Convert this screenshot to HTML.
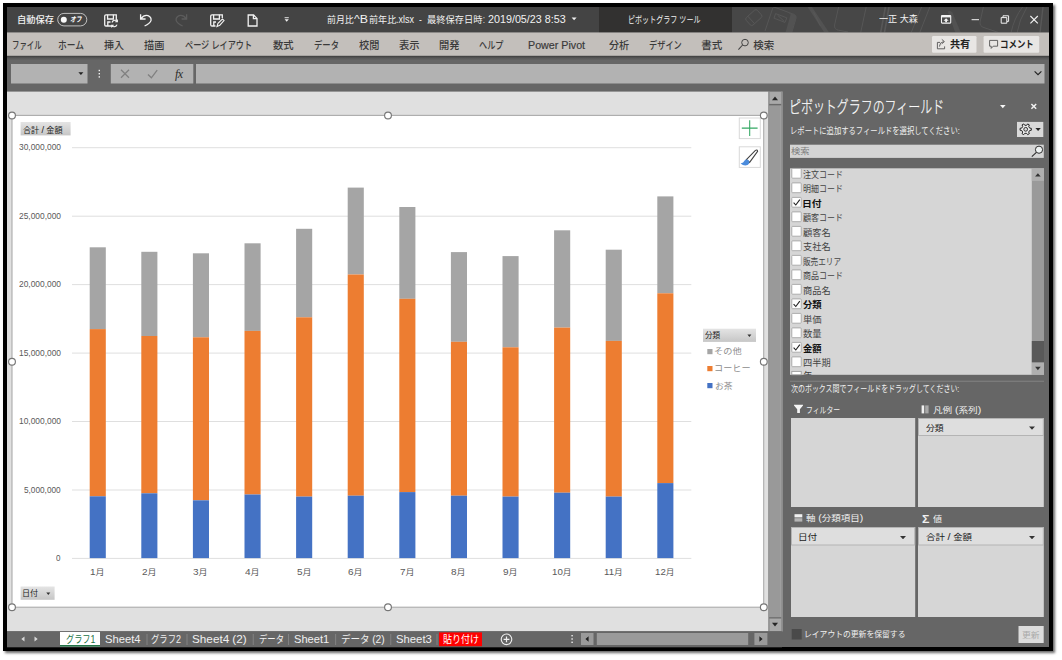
<!DOCTYPE html>
<html lang="ja">
<head>
<meta charset="utf-8">
<title>前月比^B前年比.xlsx - Excel</title>
<style>
html,body{margin:0;padding:0;background:#fff;}
body{width:1062px;height:660px;position:relative;overflow:hidden;font-family:"Liberation Sans","Noto Sans CJK JP",sans-serif;}
#frame{position:absolute;left:3px;top:3px;width:1050px;height:648px;background:#000;box-shadow:1.5px 1.5px 2.5px rgba(0,0,0,.6);}
#bg{position:absolute;left:0;top:0;width:1062px;height:660px;}
.t{position:absolute;white-space:pre;transform-origin:0 0;display:block;}
</style>
</head>
<body>
<div id="frame"></div>
<svg id="bg" width="1062" height="660" viewBox="0 0 1062 660">
<defs>
<linearGradient id="gbtn" x1="0" y1="0" x2="0" y2="1"><stop offset="0" stop-color="#e4e4e4"/><stop offset="1" stop-color="#c6c6c6"/></linearGradient>
<linearGradient id="gsh" x1="0" y1="0" x2="0" y2="1"><stop offset="0" stop-color="#3c3c3c"/><stop offset="0.5" stop-color="#585858"/><stop offset="1" stop-color="#666666"/></linearGradient>
<clipPath id="cpTitle"><rect x="732" y="7" width="317" height="25.5"/></clipPath>
</defs>
<!-- app background -->
<rect x="7" y="7" width="1042" height="640" fill="#666666"/>
<!-- ===== title bar ===== -->
<rect x="7" y="7" width="1042" height="25.5" fill="#444444"/>
<rect x="599" y="7" width="133" height="25.5" fill="#323130"/>
<rect x="732" y="7" width="317" height="25.5" fill="#474747"/>
<g clip-path="url(#cpTitle)" fill="none" stroke="#585858" stroke-width="0.9">
<g transform="translate(753.8 17.6) rotate(-42)"><rect x="-7.5" y="-5" width="15" height="10" rx="2"/><path d="M-3.5 -5 V5"/></g>
<path d="M765 31 L772.8 8 Q773.4 7 775 7.4 L794 14.4 Q796.6 15.6 796 18 L791.6 33"/>
<path d="M787.4 12 L794 14.4 Q796.6 15.6 796 18 L791.6 33 H785.4 L790.6 14.4Z" fill="#525252" stroke="none"/>
<path d="M775.6 13.6 L786.8 17.8 L785 22.4 L774 18.2Z M777.6 15.2 L784 21.2"/>
<path d="M807.6 7 H812 L829.4 33 H824.6Z" fill="#525252" stroke="none"/>
<path d="M813.6 12 L820.4 26"/>
<path d="M838.6 7 L834.6 25 Q834 29.4 838.4 30.2 L848 32"/>
<path d="M866.2 7 L860.6 33"/>
<path d="M885.4 7 L880.6 33 M889 7 L884.4 33" stroke-width="1.6"/>
<path d="M929.8 7 L919.6 33 M921.6 7 L911 33"/>
<path d="M947.6 11.6 Q950.6 10 952.4 12.6 L961 33 H955.4Z" fill="#525252" stroke="none"/>
<path d="M983.4 7 L980 22 Q979.6 26.4 984 27.6 L1000 33"/>
<path d="M1022.6 7 Q1014 18 1011 33 M1027 7 Q1019 20 1017 33"/>
<path d="M1043 7 L1040 33" stroke-width="1.4"/>
</g>
<!-- ===== ribbon ===== -->
<rect x="7" y="32.5" width="1042" height="23.5" fill="#c3bfbb"/>
<rect x="7" y="55.8" width="1042" height="4.6" fill="url(#gsh)"/>
<rect x="932" y="36" width="44.5" height="16.7" rx="1.2" fill="#e8e6e4"/>
<rect x="983.6" y="36" width="55.6" height="16.7" rx="1.2" fill="#e8e6e4"/>
<!-- ===== formula bar ===== -->
<rect x="11" y="64" width="76.5" height="19.5" fill="#b2b2b2"/>
<rect x="110.8" y="64" width="82.5" height="19.5" fill="#b2b2b2"/>
<rect x="196" y="64" width="848.5" height="19.5" fill="#b2b2b2"/>
<!-- ===== sheet area ===== -->
<rect x="7" y="91.6" width="761.5" height="539.7" fill="#e0e0e0"/>
<rect x="12" y="115.4" width="751.7" height="491.8" fill="#ffffff" stroke="#ababab" stroke-width="1.1"/>
<rect x="72" y="147.2" width="619.3" height="1" fill="#dfdfdf"/>
<rect x="72" y="215.7" width="619.3" height="1" fill="#dfdfdf"/>
<rect x="72" y="284.1" width="619.3" height="1" fill="#dfdfdf"/>
<rect x="72" y="352.6" width="619.3" height="1" fill="#dfdfdf"/>
<rect x="72" y="421.0" width="619.3" height="1" fill="#dfdfdf"/>
<rect x="72" y="489.5" width="619.3" height="1" fill="#dfdfdf"/>
<rect x="72" y="557.9" width="619.3" height="1" fill="#dfdfdf"/>
<rect x="89.7" y="247.3" width="16.1" height="81.8" fill="#a5a5a5"/>
<rect x="89.7" y="329.1" width="16.1" height="167.2" fill="#ed7d31"/>
<rect x="89.7" y="496.3" width="16.1" height="61.8" fill="#4472c4"/>
<rect x="141.3" y="251.8" width="16.1" height="84.2" fill="#a5a5a5"/>
<rect x="141.3" y="336" width="16.1" height="157.3" fill="#ed7d31"/>
<rect x="141.3" y="493.3" width="16.1" height="64.8" fill="#4472c4"/>
<rect x="192.9" y="253.3" width="16.1" height="84.0" fill="#a5a5a5"/>
<rect x="192.9" y="337.3" width="16.1" height="163.0" fill="#ed7d31"/>
<rect x="192.9" y="500.3" width="16.1" height="57.8" fill="#4472c4"/>
<rect x="244.5" y="243.3" width="16.1" height="87.6" fill="#a5a5a5"/>
<rect x="244.5" y="330.9" width="16.1" height="163.6" fill="#ed7d31"/>
<rect x="244.5" y="494.5" width="16.1" height="63.6" fill="#4472c4"/>
<rect x="296.1" y="228.8" width="16.1" height="88.5" fill="#a5a5a5"/>
<rect x="296.1" y="317.3" width="16.1" height="179.3" fill="#ed7d31"/>
<rect x="296.1" y="496.6" width="16.1" height="61.5" fill="#4472c4"/>
<rect x="347.7" y="187.6" width="16.1" height="86.9" fill="#a5a5a5"/>
<rect x="347.7" y="274.5" width="16.1" height="221.2" fill="#ed7d31"/>
<rect x="347.7" y="495.7" width="16.1" height="62.4" fill="#4472c4"/>
<rect x="399.3" y="207" width="16.1" height="91.8" fill="#a5a5a5"/>
<rect x="399.3" y="298.8" width="16.1" height="193.3" fill="#ed7d31"/>
<rect x="399.3" y="492.1" width="16.1" height="66.0" fill="#4472c4"/>
<rect x="450.9" y="252.1" width="16.1" height="89.7" fill="#a5a5a5"/>
<rect x="450.9" y="341.8" width="16.1" height="153.9" fill="#ed7d31"/>
<rect x="450.9" y="495.7" width="16.1" height="62.4" fill="#4472c4"/>
<rect x="502.5" y="256.1" width="16.1" height="91.2" fill="#a5a5a5"/>
<rect x="502.5" y="347.3" width="16.1" height="149.3" fill="#ed7d31"/>
<rect x="502.5" y="496.6" width="16.1" height="61.5" fill="#4472c4"/>
<rect x="554.1" y="230.3" width="16.1" height="97.3" fill="#a5a5a5"/>
<rect x="554.1" y="327.6" width="16.1" height="165.1" fill="#ed7d31"/>
<rect x="554.1" y="492.7" width="16.1" height="65.4" fill="#4472c4"/>
<rect x="605.7" y="249.7" width="16.1" height="91.2" fill="#a5a5a5"/>
<rect x="605.7" y="340.9" width="16.1" height="155.7" fill="#ed7d31"/>
<rect x="605.7" y="496.6" width="16.1" height="61.5" fill="#4472c4"/>
<rect x="657.3" y="196.4" width="16.1" height="96.9" fill="#a5a5a5"/>
<rect x="657.3" y="293.3" width="16.1" height="189.8" fill="#ed7d31"/>
<rect x="657.3" y="483.1" width="16.1" height="75.0" fill="#4472c4"/>
<rect x="20.6" y="122" width="50" height="13.4" fill="url(#gbtn)"/>
<rect x="20.6" y="586.5" width="34" height="13.3" fill="url(#gbtn)"/>
<rect x="703" y="328.7" width="53" height="13.2" fill="url(#gbtn)"/>
<path d="M46.3 592.4 h4 l-2 2.5Z M747.4 334.4 h4 l-2 2.5Z" fill="#333"/>
<rect x="707.3" y="349" width="5.2" height="5.2" fill="#a5a5a5"/>
<rect x="707.3" y="366" width="5.2" height="5.2" fill="#ed7d31"/>
<rect x="707.3" y="383" width="5.2" height="5.2" fill="#4472c4"/>
<rect x="739.3" y="118" width="21" height="20.6" fill="#fff" stroke="#d9d9d9" stroke-width="1"/>
<rect x="739.3" y="146.8" width="21" height="20.6" fill="#fff" stroke="#d9d9d9" stroke-width="1"/>
<path d="M741.8 128.1H757.6M749.7 120.3V136" stroke="#33a863" stroke-width="1.05" fill="none"/>
<path d="M746.4 159.6 L755.4 150.4 Q757.2 149.2 757.6 151.4 L749.6 162.4Z" fill="#fff" stroke="#404040" stroke-width="1.1"/>
<path d="M740.6 163.6 Q743.6 163 744.6 160.6 Q746.4 158.6 748.8 160.4 Q750.4 163 747.6 165 Q744 166.4 740.6 163.6Z" fill="#4a8bdc"/>
<circle cx="12" cy="115.5" r="3.4" fill="#fff" stroke="#767676" stroke-width="1.15"/>
<circle cx="388" cy="115.5" r="3.4" fill="#fff" stroke="#767676" stroke-width="1.15"/>
<circle cx="763.8" cy="115.5" r="3.4" fill="#fff" stroke="#767676" stroke-width="1.15"/>
<circle cx="12" cy="361.7" r="3.4" fill="#fff" stroke="#767676" stroke-width="1.15"/>
<circle cx="763.8" cy="361.7" r="3.4" fill="#fff" stroke="#767676" stroke-width="1.15"/>
<circle cx="12" cy="607.2" r="3.4" fill="#fff" stroke="#767676" stroke-width="1.15"/>
<circle cx="388" cy="607.2" r="3.4" fill="#fff" stroke="#767676" stroke-width="1.15"/>
<circle cx="763.8" cy="607.2" r="3.4" fill="#fff" stroke="#767676" stroke-width="1.15"/>
<!-- ===== v scrollbar ===== -->
<rect x="768.6" y="91.6" width="14" height="539.7" fill="#a9a9a9"/>
<rect x="768.6" y="91.6" width="1" height="539.7" fill="#8a8a8a"/>
<rect x="781.2" y="91.6" width="1.4" height="539.7" fill="#8c8c8c"/>
<rect x="769.8" y="105.4" width="10.8" height="512" fill="#999999"/>
<rect x="769.2" y="103.9" width="12" height="1.5" fill="#6a6a6a"/>
<rect x="769.2" y="617.2" width="12" height="1.3" fill="#6a6a6a"/>
<path d="M772 100.2 L775 96.6 L778 100.2Z" fill="#262626"/>
<path d="M772 622.8 L775 626.4 L778 622.8Z" fill="#262626"/>
<!-- ===== bottom bar ===== -->
<rect x="7" y="631.3" width="775" height="16" fill="#666666"/>
<rect x="60" y="632" width="40" height="14.5" fill="#ffffff"/>
<rect x="60" y="645" width="40" height="1.6" fill="#217346"/>
<rect x="439" y="632.4" width="43" height="13.8" fill="#ff0000"/>
<g fill="#8a8a8a">
<rect x="146.6" y="634" width="0.8" height="11"/><rect x="186.6" y="634" width="0.8" height="11"/>
<rect x="252.8" y="634" width="0.8" height="11"/><rect x="288" y="634" width="0.8" height="11"/>
<rect x="335.3" y="634" width="0.8" height="11"/><rect x="390.4" y="634" width="0.8" height="11"/>
<rect x="436.6" y="634" width="0.8" height="11"/>
</g>
<path d="M24.5 636.4 L21.3 639 L24.5 641.6Z M34.5 636.4 L37.7 639 L34.5 641.6Z" fill="#d8d8d8"/>
<circle cx="506.5" cy="639.3" r="5.3" fill="none" stroke="#f0f0f0" stroke-width="1.1"/>
<path d="M503.6 639.3H509.4M506.5 636.4V642.2" stroke="#f0f0f0" stroke-width="1.2" fill="none"/>
<g fill="#f0f0f0"><rect x="571.4" y="635" width="1.4" height="1.4"/><rect x="571.4" y="638.3" width="1.4" height="1.4"/><rect x="571.4" y="641.6" width="1.4" height="1.4"/></g>
<rect x="581" y="633" width="12.5" height="12" fill="#9a9a9a"/>
<rect x="596.8" y="633" width="151.4" height="12" fill="#9a9a9a"/>
<rect x="754.4" y="633" width="13" height="12" fill="#9a9a9a"/>
<path d="M588.6 636.3 L585.4 639 L588.6 641.7Z M759.4 636.3 L762.6 639 L759.4 641.7Z" fill="#222"/>
<!-- ===== right pane ===== -->
<rect x="1017" y="121.9" width="26.3" height="15.1" fill="#d9d9d9"/>
<rect x="790" y="144.7" width="253.8" height="13.2" fill="#d4d4d4"/>
<rect x="790" y="168.3" width="254" height="206.5" fill="#d6d6d6"/>
<rect x="1031.8" y="168.3" width="12.2" height="206.5" fill="#9a9a9a"/>
<rect x="1031.8" y="168.3" width="12.2" height="12.6" fill="#b0b0b0"/>
<rect x="1031.8" y="362.3" width="12.2" height="12.5" fill="#b0b0b0"/>
<rect x="1031.8" y="341" width="12.2" height="21.3" fill="#595959"/>
<path d="M1035.1 176.6 L1037.9 173.2 L1040.7 176.6Z" fill="#333"/>
<path d="M1035.1 366.8 L1037.9 370.2 L1040.7 366.8Z" fill="#333"/>
<rect x="791.8" y="168.4" width="9.4" height="9.8" rx="0.8" fill="#fff" stroke="#a6a6a6" stroke-width="0.9"/>
<rect x="791.8" y="182.9" width="9.4" height="9.8" rx="0.8" fill="#fff" stroke="#a6a6a6" stroke-width="0.9"/>
<rect x="791.8" y="197.4" width="9.4" height="9.8" rx="0.8" fill="#fff" stroke="#a6a6a6" stroke-width="0.9"/>
<path d="M793.6 202.6 L795.8 205.0 L799.8 199.6" fill="none" stroke="#222" stroke-width="1.1"/>
<rect x="791.8" y="211.9" width="9.4" height="9.8" rx="0.8" fill="#fff" stroke="#a6a6a6" stroke-width="0.9"/>
<rect x="791.8" y="226.4" width="9.4" height="9.8" rx="0.8" fill="#fff" stroke="#a6a6a6" stroke-width="0.9"/>
<rect x="791.8" y="240.9" width="9.4" height="9.8" rx="0.8" fill="#fff" stroke="#a6a6a6" stroke-width="0.9"/>
<rect x="791.8" y="255.4" width="9.4" height="9.8" rx="0.8" fill="#fff" stroke="#a6a6a6" stroke-width="0.9"/>
<rect x="791.8" y="269.9" width="9.4" height="9.8" rx="0.8" fill="#fff" stroke="#a6a6a6" stroke-width="0.9"/>
<rect x="791.8" y="284.4" width="9.4" height="9.8" rx="0.8" fill="#fff" stroke="#a6a6a6" stroke-width="0.9"/>
<rect x="791.8" y="298.9" width="9.4" height="9.8" rx="0.8" fill="#fff" stroke="#a6a6a6" stroke-width="0.9"/>
<path d="M793.6 304.1 L795.8 306.5 L799.8 301.1" fill="none" stroke="#222" stroke-width="1.1"/>
<rect x="791.8" y="313.4" width="9.4" height="9.8" rx="0.8" fill="#fff" stroke="#a6a6a6" stroke-width="0.9"/>
<rect x="791.8" y="327.9" width="9.4" height="9.8" rx="0.8" fill="#fff" stroke="#a6a6a6" stroke-width="0.9"/>
<rect x="791.8" y="342.4" width="9.4" height="9.8" rx="0.8" fill="#fff" stroke="#a6a6a6" stroke-width="0.9"/>
<path d="M793.6 347.6 L795.8 350.0 L799.8 344.6" fill="none" stroke="#222" stroke-width="1.1"/>
<rect x="791.8" y="356.9" width="9.4" height="9.8" rx="0.8" fill="#fff" stroke="#a6a6a6" stroke-width="0.9"/>
<rect x="791.8" y="371.4" width="9.4" height="3.4" fill="#fff" stroke="#9c9c9c" stroke-width="0.9"/>
<rect x="790" y="380.8" width="254" height="0.8" fill="#8a8a8a"/>
<rect x="791" y="418" width="124.2" height="89" fill="#d6d6d6"/>
<rect x="918" y="418" width="125.8" height="89" fill="#d6d6d6"/>
<rect x="791" y="527" width="124.2" height="90" fill="#d6d6d6"/>
<rect x="918" y="527" width="125.8" height="90" fill="#d6d6d6"/>
<rect x="918.5" y="418.5" width="124.8" height="17" fill="#dedede" stroke="#b4b4b4" stroke-width="1"/>
<rect x="791.5" y="527.5" width="123.2" height="17.5" fill="#dedede" stroke="#b4b4b4" stroke-width="1"/>
<rect x="918.5" y="527.5" width="124.8" height="17.5" fill="#dedede" stroke="#b4b4b4" stroke-width="1"/>
<path d="M1029 426.6 h6 l-3 3.2Z M900 536 h6 l-3 3.2Z M1029 536 h6 l-3 3.2Z" fill="#333"/>
<rect x="791.7" y="629" width="10" height="10.5" fill="#4a4a4a"/>
<rect x="1018.5" y="626" width="25.2" height="17" fill="#dcdcdc"/>
<rect x="57.7" y="13.4" width="29.1" height="12.5" rx="6.25" fill="none" stroke="#d4d4d4" stroke-width="0.85"/>
<circle cx="63.8" cy="19.7" r="3" fill="#fafafa"/>
<g fill="none" stroke="#f2f2f2" stroke-width="1.3"><path d="M111 26 H106 Q104.7 26 104.7 24.7 V16 Q104.7 14.8 106 14.8 H116.3 V20"/><path d="M107.6 14.8 V19 H113.4 V14.8"/><path d="M107.8 26 V22 H110.5"/><path d="M112 22.5 A3 3 0 0 1 117.2 21.4 M117.4 19.6 V21.8 H115.2 M117 24.6 A3 3 0 0 1 111.8 25.6 M111.6 27.4 V25.2 H113.8" stroke-width="1.1"/></g>
<path d="M140.6 14.2 V19 H145.6 M141 18.6 Q144 14.6 148 15.6 Q151.6 17 151 20.6 Q150 23.4 144.6 26" fill="none" stroke="#f2f2f2" stroke-width="1.3"/>
<path d="M186.6 14.2 V19 H181.6 M186.2 18.6 Q183.2 14.6 179.2 15.6 Q175.6 17 176.2 20.6 Q177.2 23.4 182.6 26" fill="none" stroke="#5c5c5c" stroke-width="1.3"/>
<g fill="none" stroke="#f2f2f2" stroke-width="1.3"><path d="M215.5 26 H212 Q210.7 26 210.7 24.7 V16 Q210.7 14.8 212 14.8 H222.3 V18"/><path d="M213.6 14.8 V19 H219.4 V14.8"/><path d="M213.8 26 V22 H216"/><path d="M217 26.4 L218 23.4 L222.4 19 L224 20.6 L219.8 25.2Z" stroke-width="1.1"/></g>
<path d="M248.2 15 H253.6 L257 18.4 V26 H248.2Z M253.4 15 V18.6 H257" fill="none" stroke="#f2f2f2" stroke-width="1.3"/>
<path d="M284.6 17.7 H288.8" stroke="#f2f2f2" stroke-width="0.9"/><path d="M284.6 19.3 H288.8 L286.7 21.7Z" fill="#f2f2f2"/>
<path d="M571.6 17.4 h5 l-2.5 2.8Z" fill="#f2f2f2"/>
<rect x="941.5" y="15.5" width="9.2" height="7.6" rx="0.6" fill="none" stroke="#f2f2f2" stroke-width="1.1"/><path d="M941.5 16.6 H950.7" stroke="#f2f2f2" stroke-width="1.6"/><path d="M946.1 18.2 L948.7 20.8 H947 V22.2 H945.2 V20.8 H943.5Z" fill="#f2f2f2"/>
<path d="M971.6 19.7 H979" stroke="#f2f2f2" stroke-width="1"/>
<path d="M1001.2 17.6 H1006.8 V23.2 H1001.2Z M1003 17.4 V15.8 H1008.6 V21.4 H1007" fill="none" stroke="#f2f2f2" stroke-width="1"/>
<path d="M1030.4 16 L1037.8 23.4 M1037.8 16 L1030.4 23.4" stroke="#f2f2f2" stroke-width="1.1"/>
<circle cx="745" cy="42.6" r="3.3" fill="none" stroke="#444" stroke-width="1"/><path d="M742.6 45 L738.4 49.6" stroke="#444" stroke-width="1.1"/>
<path d="M940 42.4 H937.4 V48.8 H944.6 V46.4 M939.4 46.6 Q939.6 42.2 943.6 41.6 M941.8 39.4 L944.4 41.6 L941.8 43.8" fill="none" stroke="#555" stroke-width="0.9"/>
<path d="M989.6 40.4 H997.6 V46.2 H993.2 L991.2 48.4 V46.2 H989.6Z" fill="none" stroke="#555" stroke-width="0.9"/>
<path d="M78.4 72.2 h5 l-2.5 2.7Z" fill="#222"/>
<g fill="#f0f0f0"><rect x="98.6" y="69.8" width="1.4" height="1.4"/><rect x="98.6" y="73" width="1.4" height="1.4"/><rect x="98.6" y="76.2" width="1.4" height="1.4"/></g>
<path d="M121 69.8 L129 77.8 M129 69.8 L121 77.8" stroke="#808080" stroke-width="1.25"/>
<path d="M148 74.4 L151.4 77.8 L157.2 70.2" fill="none" stroke="#808080" stroke-width="1.35"/>
<path d="M1034.6 71.4 L1038 74.6 L1041.4 71.4" fill="none" stroke="#222" stroke-width="1.2"/>
<path d="M1000 105 h5.6 l-2.8 3.3Z" fill="#f6f6f6"/>
<path d="M1031.4 104 L1036.2 108.8 M1036.2 104 L1031.4 108.8" stroke="#f0f0f0" stroke-width="1.5"/>
<path d="M1029.62 128.09 L1031.32 128.34 L1031.32 130.26 L1029.62 130.51 L1028.71 132.09 L1029.34 133.68 L1027.67 134.65 L1026.61 133.30 L1024.79 133.30 L1023.73 134.65 L1022.06 133.68 L1022.69 132.09 L1021.78 130.51 L1020.08 130.26 L1020.08 128.34 L1021.78 128.09 L1022.69 126.51 L1022.06 124.92 L1023.73 123.95 L1024.79 125.30 L1026.61 125.30 L1027.67 123.95 L1029.34 124.92 L1028.71 126.51Z" fill="#ececec" stroke="#222" stroke-width="1" stroke-linejoin="round"/><circle cx="1025.7" cy="129.3" r="1.9" fill="#d8d8d8" stroke="#222" stroke-width="0.9"/>
<path d="M1035.4 128 h5.4 l-2.7 2.9Z" fill="#262626"/>
<circle cx="1039" cy="149.7" r="3.6" fill="#eef2f2" stroke="#2c2c2c" stroke-width="1"/><path d="M1036.4 152.4 L1031.8 156.6" stroke="#2c2c2c" stroke-width="1.1"/>
<path d="M794 404.8 H803 V405.6 L799.9 409.2 V413 H797.2 V409.2 L794 405.6Z" fill="#f4f4f4"/>
<rect x="921.6" y="405.4" width="2.6" height="8" fill="#f0f0f0"/><rect x="925.2" y="405.4" width="3.4" height="8" fill="#a8a8a8"/>
<rect x="794.5" y="514.2" width="7.8" height="3.2" fill="#f0f0f0"/><rect x="794.5" y="518.2" width="7.8" height="3.4" fill="#b4b4b4"/>
</svg>
<span class="t" style="left:17.17px;top:13.50px;font-size:9px;line-height:13.5px;color:#f2f2f2;transform:scaleX(1.031);font-weight:500;">自動保存</span>
<span class="t" style="left:70.33px;top:14.20px;font-size:7.5px;line-height:11.25px;color:#ffffff;transform:scaleX(0.773);font-style:italic;font-weight:700;">オフ</span>
<span class="t" style="left:326.60px;top:13.70px;font-size:9px;line-height:13.5px;color:#f2f2f2;transform:scaleX(0.989);">前月比</span>
<span class="t" style="left:354.30px;top:12.20px;font-size:10.5px;line-height:15.75px;color:#f2f2f2;transform:scaleX(1.175);">^B</span>
<span class="t" style="left:368.50px;top:13.70px;font-size:9px;line-height:13.5px;color:#f2f2f2;transform:scaleX(1.011);">前年比</span>
<span class="t" style="left:396.30px;top:12.20px;font-size:10.2px;line-height:15.3px;color:#f2f2f2;transform:scaleX(0.881);">.xlsx</span>
<span class="t" style="left:419.30px;top:12.20px;font-size:10px;line-height:15.0px;color:#f2f2f2;transform:scaleX(0.850);">-</span>
<span class="t" style="left:426.50px;top:13.70px;font-size:9px;line-height:13.5px;color:#f2f2f2;transform:scaleX(1.026);">最終保存日時</span>
<span class="t" style="left:482.90px;top:12.20px;font-size:10px;line-height:15.0px;color:#f2f2f2;transform:scaleX(0.667);">:</span>
<span class="t" style="left:488.10px;top:12.20px;font-size:10.3px;line-height:15.45px;color:#f2f2f2;transform:scaleX(1.043);">2019/05/23 8:53</span>
<span class="t" style="left:628.42px;top:13.50px;font-size:9px;line-height:13.5px;color:#f2f2f2;transform:scaleX(0.784);">ピボットグラフ ツール</span>
<span class="t" style="left:878.60px;top:13.00px;font-size:9px;line-height:13.5px;color:#f2f2f2;transform:scaleX(1.010);">一正 大森</span>
<span class="t" style="left:12.29px;top:37.80px;font-size:10.5px;line-height:15.75px;color:#3a3a3a;transform:scaleX(0.707);font-weight:500;">ファイル</span>
<span class="t" style="left:57.90px;top:37.80px;font-size:10.5px;line-height:15.75px;color:#3a3a3a;transform:scaleX(0.829);font-weight:500;">ホーム</span>
<span class="t" style="left:103.80px;top:37.80px;font-size:10.5px;line-height:15.75px;color:#3a3a3a;transform:scaleX(0.952);font-weight:500;">挿入</span>
<span class="t" style="left:144.10px;top:37.80px;font-size:10.5px;line-height:15.75px;color:#3a3a3a;transform:scaleX(0.967);font-weight:500;">描画</span>
<span class="t" style="left:185.40px;top:37.80px;font-size:10.5px;line-height:15.75px;color:#3a3a3a;transform:scaleX(0.774);font-weight:500;">ページ レイアウト</span>
<span class="t" style="left:273.30px;top:37.80px;font-size:10.5px;line-height:15.75px;color:#3a3a3a;transform:scaleX(0.981);font-weight:500;">数式</span>
<span class="t" style="left:313.70px;top:37.80px;font-size:10.5px;line-height:15.75px;color:#3a3a3a;transform:scaleX(0.794);font-weight:500;">データ</span>
<span class="t" style="left:358.50px;top:37.80px;font-size:10.5px;line-height:15.75px;color:#3a3a3a;transform:scaleX(0.967);font-weight:500;">校閲</span>
<span class="t" style="left:398.60px;top:37.80px;font-size:10.5px;line-height:15.75px;color:#3a3a3a;transform:scaleX(0.981);font-weight:500;">表示</span>
<span class="t" style="left:438.60px;top:37.80px;font-size:10.5px;line-height:15.75px;color:#3a3a3a;transform:scaleX(0.976);font-weight:500;">開発</span>
<span class="t" style="left:479.00px;top:37.80px;font-size:10.5px;line-height:15.75px;color:#3a3a3a;transform:scaleX(0.778);font-weight:500;">ヘルプ</span>
<span class="t" style="left:527.70px;top:36.80px;font-size:11px;line-height:16.5px;color:#3a3a3a;transform:scaleX(0.972);-webkit-text-stroke:0.2px #3a3a3a;">Power Pivot</span>
<span class="t" style="left:608.70px;top:37.80px;font-size:10.5px;line-height:15.75px;color:#3a3a3a;transform:scaleX(0.962);font-weight:500;">分析</span>
<span class="t" style="left:648.90px;top:37.80px;font-size:10.5px;line-height:15.75px;color:#3a3a3a;transform:scaleX(0.781);font-weight:500;">デザイン</span>
<span class="t" style="left:701.30px;top:37.80px;font-size:10.5px;line-height:15.75px;color:#3a3a3a;transform:scaleX(1.000);font-weight:500;">書式</span>
<span class="t" style="left:753.20px;top:37.80px;font-size:10.5px;line-height:15.75px;color:#3a3a3a;transform:scaleX(1.000);font-weight:500;">検索</span>
<span class="t" style="left:949.70px;top:37.20px;font-size:10px;line-height:15.0px;color:#222;transform:scaleX(1.010);font-weight:bold;">共有</span>
<span class="t" style="left:1000.16px;top:36.80px;font-size:10px;line-height:15.0px;color:#222;transform:scaleX(0.845);font-weight:bold;">コメント</span>
<span class="t" style="left:18.50px;top:141.40px;font-size:9.3px;line-height:13.95px;color:#595959;transform:scaleX(0.902);">30,000,000</span>
<span class="t" style="left:18.50px;top:209.90px;font-size:9.3px;line-height:13.95px;color:#595959;transform:scaleX(0.902);">25,000,000</span>
<span class="t" style="left:18.50px;top:278.30px;font-size:9.3px;line-height:13.95px;color:#595959;transform:scaleX(0.902);">20,000,000</span>
<span class="t" style="left:18.50px;top:346.80px;font-size:9.3px;line-height:13.95px;color:#595959;transform:scaleX(0.902);">15,000,000</span>
<span class="t" style="left:18.50px;top:415.20px;font-size:9.3px;line-height:13.95px;color:#595959;transform:scaleX(0.902);">10,000,000</span>
<span class="t" style="left:23.70px;top:483.70px;font-size:9.3px;line-height:13.95px;color:#595959;transform:scaleX(0.886);">5,000,000</span>
<span class="t" style="left:55.70px;top:552.10px;font-size:9.3px;line-height:13.95px;color:#595959;transform:scaleX(0.867);">0</span>
<span class="t" style="left:90.10px;top:566.20px;font-size:8.3px;line-height:12.45px;color:#595959;transform:scaleX(1.077);"><span style="font-size:1.12em">1</span>月</span>
<span class="t" style="left:141.70px;top:566.20px;font-size:8.3px;line-height:12.45px;color:#595959;transform:scaleX(1.077);"><span style="font-size:1.12em">2</span>月</span>
<span class="t" style="left:193.30px;top:566.20px;font-size:8.3px;line-height:12.45px;color:#595959;transform:scaleX(1.077);"><span style="font-size:1.12em">3</span>月</span>
<span class="t" style="left:244.90px;top:566.20px;font-size:8.3px;line-height:12.45px;color:#595959;transform:scaleX(1.077);"><span style="font-size:1.12em">4</span>月</span>
<span class="t" style="left:296.50px;top:566.20px;font-size:8.3px;line-height:12.45px;color:#595959;transform:scaleX(1.077);"><span style="font-size:1.12em">5</span>月</span>
<span class="t" style="left:348.10px;top:566.20px;font-size:8.3px;line-height:12.45px;color:#595959;transform:scaleX(1.077);"><span style="font-size:1.12em">6</span>月</span>
<span class="t" style="left:399.70px;top:566.20px;font-size:8.3px;line-height:12.45px;color:#595959;transform:scaleX(1.077);"><span style="font-size:1.12em">7</span>月</span>
<span class="t" style="left:451.30px;top:566.20px;font-size:8.3px;line-height:12.45px;color:#595959;transform:scaleX(1.077);"><span style="font-size:1.12em">8</span>月</span>
<span class="t" style="left:502.90px;top:566.20px;font-size:8.3px;line-height:12.45px;color:#595959;transform:scaleX(1.077);"><span style="font-size:1.12em">9</span>月</span>
<span class="t" style="left:552.10px;top:566.20px;font-size:8.3px;line-height:12.45px;color:#595959;transform:scaleX(1.044);"><span style="font-size:1.12em">10</span>月</span>
<span class="t" style="left:603.70px;top:566.20px;font-size:8.3px;line-height:12.45px;color:#595959;transform:scaleX(1.044);"><span style="font-size:1.12em">11</span>月</span>
<span class="t" style="left:655.30px;top:566.20px;font-size:8.3px;line-height:12.45px;color:#595959;transform:scaleX(1.044);"><span style="font-size:1.12em">12</span>月</span>
<span class="t" style="left:22.70px;top:123.80px;font-size:8px;line-height:12.0px;color:#222;transform:scaleX(1.015);">合計 <span style="font-size:1.15em">/</span> 金額</span>
<span class="t" style="left:21.69px;top:588.20px;font-size:8px;line-height:12.0px;color:#222;transform:scaleX(1.007);">日付</span>
<span class="t" style="left:705.20px;top:330.40px;font-size:8px;line-height:12.0px;color:#222;transform:scaleX(0.944);">分類</span>
<span class="t" style="left:714.12px;top:345.00px;font-size:8.5px;line-height:12.75px;color:#8c8c8c;transform:scaleX(1.084);">その他</span>
<span class="t" style="left:714.12px;top:362.00px;font-size:8.5px;line-height:12.75px;color:#8c8c8c;transform:scaleX(1.079);">コーヒー</span>
<span class="t" style="left:715.20px;top:379.50px;font-size:8.5px;line-height:12.75px;color:#8c8c8c;transform:scaleX(1.035);">お茶</span>
<span class="t" style="left:65.70px;top:631.60px;font-size:10.5px;line-height:15.75px;color:#217346;transform:scaleX(0.779);">グラフ<span style="font-size:1.08em">1</span></span>
<span class="t" style="left:105.20px;top:631.60px;font-size:10.5px;line-height:15.75px;color:#f0f0f0;transform:scaleX(0.989);"><span style="font-size:1.08em">Sheet4</span></span>
<span class="t" style="left:151.20px;top:631.60px;font-size:10.5px;line-height:15.75px;color:#f0f0f0;transform:scaleX(0.792);">グラフ<span style="font-size:1.08em">2</span></span>
<span class="t" style="left:192.40px;top:631.60px;font-size:10.5px;line-height:15.75px;color:#f0f0f0;transform:scaleX(1.036);"><span style="font-size:1.08em">Sheet4</span> <span style="font-size:1.08em">(2)</span></span>
<span class="t" style="left:258.70px;top:631.60px;font-size:10.5px;line-height:15.75px;color:#f0f0f0;transform:scaleX(0.794);">データ</span>
<span class="t" style="left:294.40px;top:631.60px;font-size:10.5px;line-height:15.75px;color:#f0f0f0;transform:scaleX(0.981);"><span style="font-size:1.08em">Sheet1</span></span>
<span class="t" style="left:341.30px;top:631.60px;font-size:10.5px;line-height:15.75px;color:#f0f0f0;transform:scaleX(0.906);">データ <span style="font-size:1.08em">(2)</span></span>
<span class="t" style="left:396.10px;top:631.60px;font-size:10.5px;line-height:15.75px;color:#f0f0f0;transform:scaleX(0.997);"><span style="font-size:1.08em">Sheet3</span></span>
<span class="t" style="left:442.70px;top:631.60px;font-size:10.5px;line-height:15.75px;color:#ffffff;transform:scaleX(0.860);">貼り付け</span>
<span class="t" style="left:788.95px;top:94.40px;font-size:17.5px;line-height:26.25px;color:#fafafa;transform:scaleX(0.683);font-weight:300;-webkit-text-stroke:0.25px #fafafa;">ピボットグラフのフィールド</span>
<span class="t" style="left:789.91px;top:124.60px;font-size:9.3px;line-height:13.95px;color:#f0f0f0;transform:scaleX(0.787);">レポートに追加するフィールドを選択してください:</span>
<span class="t" style="left:790.70px;top:145.30px;font-size:8.5px;line-height:12.75px;color:#7c7c7c;transform:scaleX(1.094);">検索</span>
<span class="t" style="left:803.20px;top:168.60px;font-size:9px;line-height:13.5px;color:#444444;transform:scaleX(0.889);">注文コード</span>
<span class="t" style="left:803.20px;top:183.10px;font-size:9px;line-height:13.5px;color:#444444;transform:scaleX(0.889);">明細コード</span>
<span class="t" style="left:802.11px;top:197.60px;font-size:9px;line-height:13.5px;color:#111;transform:scaleX(1.094);font-weight:bold;">日付</span>
<span class="t" style="left:803.20px;top:212.10px;font-size:9px;line-height:13.5px;color:#444444;transform:scaleX(0.889);">顧客コード</span>
<span class="t" style="left:803.20px;top:226.60px;font-size:9px;line-height:13.5px;color:#444444;transform:scaleX(1.022);">顧客名</span>
<span class="t" style="left:803.20px;top:241.10px;font-size:9px;line-height:13.5px;color:#444444;transform:scaleX(1.022);">支社名</span>
<span class="t" style="left:803.20px;top:255.60px;font-size:9px;line-height:13.5px;color:#444444;transform:scaleX(0.847);">販売エリア</span>
<span class="t" style="left:803.20px;top:270.10px;font-size:9px;line-height:13.5px;color:#444444;transform:scaleX(0.889);">商品コード</span>
<span class="t" style="left:803.20px;top:284.60px;font-size:9px;line-height:13.5px;color:#444444;transform:scaleX(1.022);">商品名</span>
<span class="t" style="left:803.20px;top:299.10px;font-size:9px;line-height:13.5px;color:#111;transform:scaleX(1.033);font-weight:bold;">分類</span>
<span class="t" style="left:803.20px;top:313.60px;font-size:9px;line-height:13.5px;color:#444444;transform:scaleX(1.033);">単価</span>
<span class="t" style="left:803.20px;top:328.10px;font-size:9px;line-height:13.5px;color:#444444;transform:scaleX(1.033);">数量</span>
<span class="t" style="left:803.20px;top:342.60px;font-size:9px;line-height:13.5px;color:#111;transform:scaleX(1.033);font-weight:bold;">金額</span>
<span class="t" style="left:803.20px;top:357.10px;font-size:9px;line-height:13.5px;color:#444444;transform:scaleX(1.022);">四半期</span>
<span class="t" style="left:790.70px;top:383.10px;font-size:9.3px;line-height:13.95px;color:#f0f0f0;transform:scaleX(0.749);">次のボックス間でフィールドをドラッグしてください:</span>
<span class="t" style="left:805.50px;top:403.50px;font-size:8.5px;line-height:12.75px;color:#f0f0f0;transform:scaleX(0.805);">フィルター</span>
<span class="t" style="left:932.70px;top:403.50px;font-size:8.5px;line-height:12.75px;color:#f0f0f0;transform:scaleX(1.130);">凡例 <span style="font-size:1.1em">(</span>系列<span style="font-size:1.1em">)</span></span>
<span class="t" style="left:806.30px;top:512.30px;font-size:8.5px;line-height:12.75px;color:#f0f0f0;transform:scaleX(1.118);">軸 <span style="font-size:1.1em">(</span>分類項目<span style="font-size:1.1em">)</span></span>
<span class="t" style="left:932.70px;top:512.80px;font-size:8.5px;line-height:12.75px;color:#f0f0f0;transform:scaleX(1.067);">値</span>
<span class="t" style="left:921.70px;top:510.50px;font-size:11px;line-height:16.5px;color:#f0f0f0;transform:scaleX(1.129);font-weight:bold;">Σ</span>
<span class="t" style="left:926.20px;top:422.00px;font-size:8.5px;line-height:12.75px;color:#222;transform:scaleX(1.035);">分類</span>
<span class="t" style="left:797.57px;top:531.30px;font-size:8.5px;line-height:12.75px;color:#222;transform:scaleX(1.131);">日付</span>
<span class="t" style="left:925.90px;top:531.30px;font-size:8.5px;line-height:12.75px;color:#222;transform:scaleX(1.110);">合計 <span style="font-size:1.15em">/</span> 金額</span>
<span class="t" style="left:804.28px;top:628.00px;font-size:8.5px;line-height:12.75px;color:#f0f0f0;transform:scaleX(0.918);">レイアウトの更新を保留する</span>
<span class="t" style="left:1022.20px;top:628.50px;font-size:8.5px;line-height:12.75px;color:#a9a9a9;transform:scaleX(1.035);">更新</span>
<span class="t" style="left:175px;top:65.5px;font-size:12px;line-height:16px;color:#2b2b2b;font-family:'Liberation Serif',serif;font-style:italic;letter-spacing:-0.6px;">fx</span>
<div style="position:absolute;left:802px;top:368px;width:40px;height:6.8px;overflow:hidden;"><span class="t" style="left:1.2px;top:2.2px;font-size:9px;line-height:13.5px;color:#3c3c3c;">年</span></div>
</body>
</html>
